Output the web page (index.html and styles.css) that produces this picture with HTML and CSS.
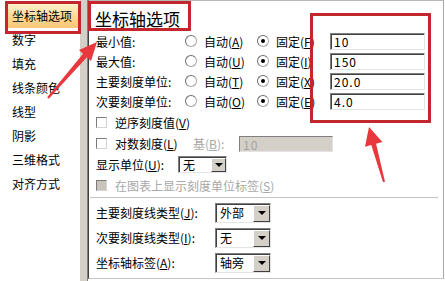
FILE: index.html
```html
<!DOCTYPE html>
<html lang="zh-CN">
<head>
  <meta charset="UTF-8" />
  <meta name="viewport" content="width=device-width, initial-scale=1.0" />
  <title>设置坐标轴格式</title>
  <link rel="stylesheet" href="styles.css">
</head>
<body>
  <div class="dialog">
    <ul class="nav">
      <li class="active">坐标轴选项</li>
      <li>数字</li>
      <li>填充</li>
      <li>线条颜色</li>
      <li>线型</li>
      <li>阴影</li>
      <li>三维格式</li>
      <li>对齐方式</li>
    </ul>
    <div class="splitter"></div>

    <div class="panel">
      <h1>坐标轴选项</h1>

      <div class="bounds">
        <span>最小值:</span>
        <label class="opt"><i class="radio"></i><span>自动(<u>A</u>)</span></label>
        <label class="opt"><i class="radio on"></i><span>固定(<u>F</u>)</span></label>
        <div class="field">10</div>

        <span>最大值:</span>
        <label class="opt"><i class="radio"></i><span>自动(<u>U</u>)</span></label>
        <label class="opt"><i class="radio on"></i><span>固定(<u>I</u>)</span></label>
        <div class="field">150</div>

        <span>主要刻度单位:</span>
        <label class="opt"><i class="radio"></i><span>自动(<u>T</u>)</span></label>
        <label class="opt"><i class="radio on"></i><span>固定(<u>X</u>)</span></label>
        <div class="field">20.0</div>

        <span>次要刻度单位:</span>
        <label class="opt"><i class="radio"></i><span>自动(<u>O</u>)</span></label>
        <label class="opt"><i class="radio on"></i><span>固定(<u>E</u>)</span></label>
        <div class="field">4.0</div>
      </div>

      <div class="flags">
        <div class="line"><i class="check"></i><span>逆序刻度值(<u>V</u>)</span></div>
        <div class="line">
          <i class="check"></i><span class="w-log">对数刻度(<u>L</u>)</span>
          <span class="w-base dim">基(<u>B</u>):</span>
          <div class="field off">10</div>
        </div>
        <div class="line">
          <span class="w-unit">显示单位(<u>U</u>):</span>
          <div class="combo"><span>无</span><b></b></div>
        </div>
        <div class="line dim"><i class="check off"></i><span>在图表上显示刻度单位标签(<u>S</u>)</span></div>
      </div>

      <div class="sep"></div>

      <div class="marks">
        <span>主要刻度线类型(<u>J</u>):</span>
        <div class="combo"><span>外部</span><b></b></div>
        <span>次要刻度线类型(<u>I</u>):</span>
        <div class="combo"><span>无</span><b></b></div>
        <span>坐标轴标签(<u>A</u>):</span>
        <div class="combo"><span>轴旁</span><b></b></div>
      </div>
    </div>
  </div>

  <!-- red callouts drawn over the dialog -->
  <svg class="notes" width="445" height="281" viewBox="0 0 445 281">
    <g fill="none" stroke="#c4262e" stroke-width="3">
      <rect x="6.5" y="2.5" width="73" height="30" />
      <rect x="89.5" y="2.5" width="100" height="27" />
      <rect x="311.5" y="14.5" width="118" height="107" />
    </g>
    <g fill="#e8383d">
      <polygon points="97,42 91,61 86.9,57.2 48.8,98.7 47.2,97.3 83.1,53.8 79,50" />
      <polygon points="369,127 382.4,142 376.1,143.7 385,181.7 383,182.3 371.3,145.1 365,146.8" />
    </g>
  </svg>
</body>
</html>
```

FILE: styles.css
```css
* {
  box-sizing: border-box;
}
body {
  margin: 0;
  width: 445px;
  height: 281px;
  overflow: hidden;
  position: relative;
  background: #fff;
  color: #000;
  font-family: "Noto Sans CJK SC", sans-serif;
  font-size: 12px;
}
u {
  text-decoration: underline;
}
i {
  display: block;
  flex: none;
}
.dialog {
  display: flex;
  height: 281px;
}

/* left list */
.nav {
  list-style: none;
  margin: 0;
  padding: 4px 2px 0 6px;
  width: 80px;
}
.nav li {
  height: 24px;
  line-height: 24px;
  padding-left: 6px;
  white-space: nowrap;
}
.nav li.active {
  background: linear-gradient(#fff2cc, #fcd892 55%, #f8c676);
}
.splitter {
  width: 8px;
  background: #d4d0c8;
  border-right: 1px solid #808080;
}

/* right panel */
.panel {
  flex: 1;
  height: 279px;
  margin-right: 1px;
  padding-left: 7px;
  white-space: nowrap;
  border-left: 1px solid #404040;
  border-top: 1px solid #b8b8b8;
  border-right: 1px solid #a8a8a8;
  border-bottom: 1px solid #c4c4c4;
}
.panel h1 {
  margin: 0 0 2px -1px;
  padding-top: 8px;
  font-size: 17px;
  font-weight: normal;
  line-height: 20px;
}
.bounds {
  display: grid;
  grid-template-columns: 87px 72px 75px 95px;
  grid-auto-rows: 20px;
  align-items: center;
}
.opt {
  display: flex;
  align-items: center;
  gap: 7px;
  padding-left: 2px;
}
.radio {
  position: relative;
  width: 12px;
  height: 12px;
  border-radius: 50%;
  border: 1px solid #a4a4a4;
  border-top-color: #6c6c6c;
  border-left-color: #6c6c6c;
  background: #fff;
}
.radio.on::after {
  content: "";
  position: absolute;
  left: 3px;
  top: 3px;
  width: 4px;
  height: 4px;
  border-radius: 50%;
  background: #000;
}
.field {
  height: 17px;
  padding-left: 3px;
  line-height: 15px;
  letter-spacing: 1px;
  background: #fff;
  border: 1px solid;
  border-color: #808080 #e4e4e4 #e4e4e4 #808080;
  box-shadow: inset 1px 1px 0 #404040;
}
.field.off {
  width: 94px;
  height: 16px;
  background: #d4d0c8;
  color: #a4a4a4;
  box-shadow: none;
}

.flags {
  padding-top: 1px;
}
.line {
  display: flex;
  align-items: center;
  height: 21px;
}
.check {
  width: 11px;
  height: 11px;
  margin-right: 8px;
  background: #fff;
  border: 1px solid;
  border-color: #7c7c7c #d4d4d4 #d4d4d4 #7c7c7c;
}
.check.off {
  background: #c8c4bc;
}
.dim {
  color: #a8a8a8;
}
.w-log {
  width: 78px;
}
.w-base {
  width: 46px;
}
.w-unit {
  width: 82px;
}

.combo {
  display: flex;
  width: 49px;
  height: 17px;
  background: #fff;
  border: 1px solid;
  border-color: #808080 #e4e4e4 #e4e4e4 #808080;
  box-shadow: inset 1px 1px 0 #404040;
}
.combo span {
  flex: 1;
  padding-left: 4px;
  line-height: 15px;
}
.combo b {
  display: flex;
  align-items: center;
  justify-content: center;
  width: 15px;
  margin: 1px 0 0;
  background: #d4d0c8;
  border: 1px solid;
  border-color: #fff #404040 #404040 #fff;
}
.combo b::after {
  content: "";
  border: 4px solid transparent;
  border-top-color: #000;
  border-bottom: 0;
}

.sep {
  height: 1px;
  margin: 1px 5px 0 -6px;
  background: #c4c4c4;
}
.marks {
  display: grid;
  grid-template-columns: 119px 56px;
  grid-auto-rows: 25px;
  align-items: center;
  padding-top: 2px;
}
.marks .combo {
  width: 56px;
  height: 20px;
}
.marks .combo span {
  line-height: 18px;
}
.marks .combo b {
  width: 17px;
}

.notes {
  position: absolute;
  left: 0;
  top: 0;
  pointer-events: none;
}
```
